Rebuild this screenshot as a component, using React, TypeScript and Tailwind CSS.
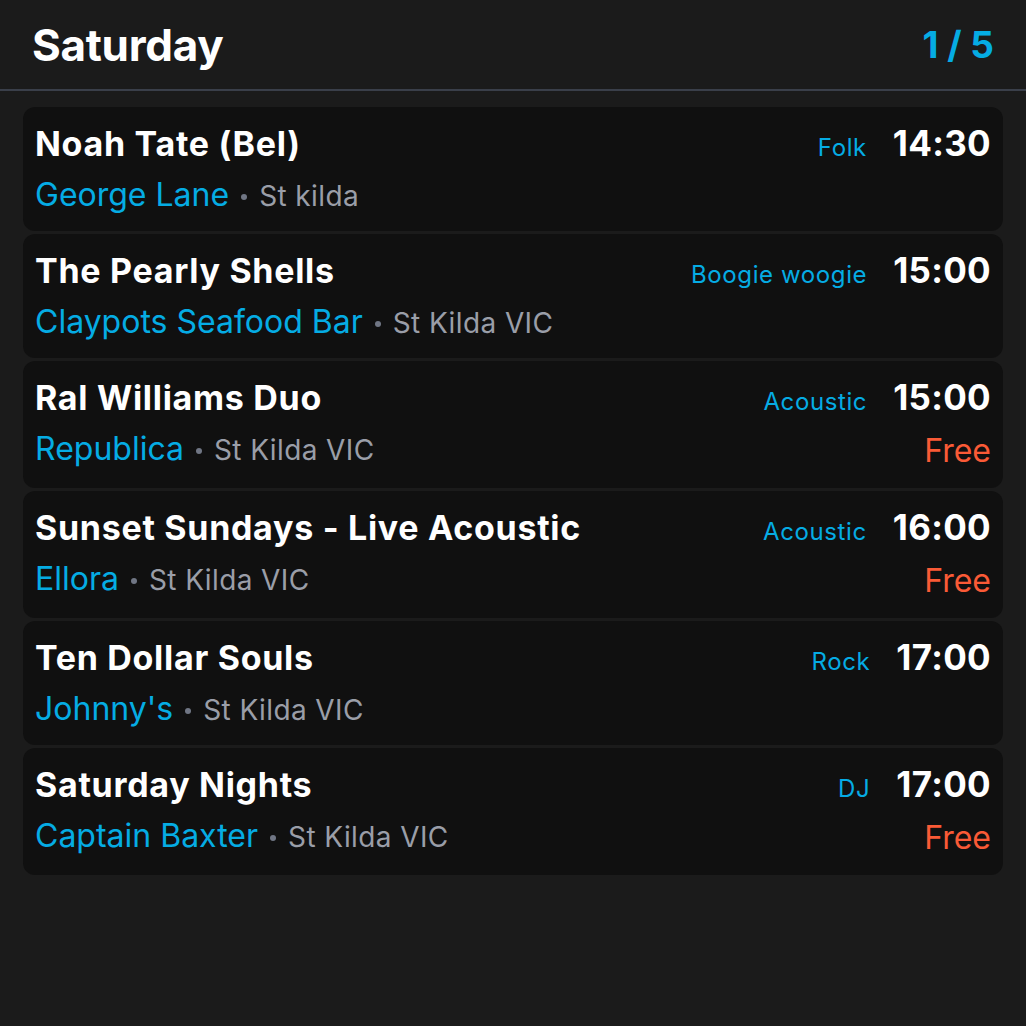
import React from "react";

type Gig = {
  title: string;
  genre: string;
  time: string;
  venue: string;
  location: string;
  free?: boolean;
};

const gigs: Gig[] = [
  { title: "Noah Tate (Bel)", genre: "Folk", time: "14:30", venue: "George Lane", location: "St kilda" },
  { title: "The Pearly Shells", genre: "Boogie woogie", time: "15:00", venue: "Claypots Seafood Bar", location: "St Kilda VIC" },
  { title: "Ral Williams Duo", genre: "Acoustic", time: "15:00", venue: "Republica", location: "St Kilda VIC", free: true },
  { title: "Sunset Sundays - Live Acoustic", genre: "Acoustic", time: "16:00", venue: "Ellora", location: "St Kilda VIC", free: true },
  { title: "Ten Dollar Souls", genre: "Rock", time: "17:00", venue: "Johnny's", location: "St Kilda VIC" },
  { title: "Saturday Nights", genre: "DJ", time: "17:00", venue: "Captain Baxter", location: "St Kilda VIC", free: true },
];

function Card({ g }: { g: Gig }) {
  return (
    <div className={`rounded-[12px] bg-[#101010] pl-3 pr-3 pt-3 ${g.free ? "pb-[19px]" : "pb-4"}`}>
      <div className="flex h-[48px] items-baseline leading-[48px]">
        <div className="flex-1 truncate text-[34px] font-bold text-white tracking-[0.7px]">{g.title}</div>
        <div className="text-[24px] text-[#05ace4] tracking-[0.6px]">{g.genre}</div>
        <div className="ml-[26px] text-[35px] font-bold text-white tracking-[0.3px]">{g.time}</div>
      </div>
      <div className="mt-2 flex h-[40px] items-baseline leading-[40px]">
        <div className="flex flex-1 items-baseline">
          <span className="text-[32px] text-[#05ace4]">{g.venue}</span>
          <span className="mx-[12px] inline-block h-[6px] w-[6px] translate-y-[-6px] rounded-full bg-[#707684]" />
          <span className="text-[28px] text-[#9a9ea8] tracking-[0.4px]">{g.location}</span>
        </div>
        {g.free && <div className="translate-y-[2px] text-[32px] text-[#fa5a36]">Free</div>}
      </div>
    </div>
  );
}

export default function App() {
  return (
    <div
      className="min-h-[1026px] w-full bg-[#1b1b1b]"
      style={{ fontFamily: "Inter, 'Noto Sans', sans-serif" }}
    >
      <div className="flex h-[91px] items-center justify-between border-b-2 border-[#3a3f4a] px-8">
        <div className="text-[44px] font-bold text-white tracking-[-0.3px]">Saturday</div>
        <div className="text-[37px] font-bold text-[#05ace4]">1 / 5</div>
      </div>
      <div className="mx-[23px] mt-[16px] flex flex-col gap-[3px]">
        {gigs.map((g, i) => (
          <Card key={i} g={g} />
        ))}
      </div>
    </div>
  );
}
